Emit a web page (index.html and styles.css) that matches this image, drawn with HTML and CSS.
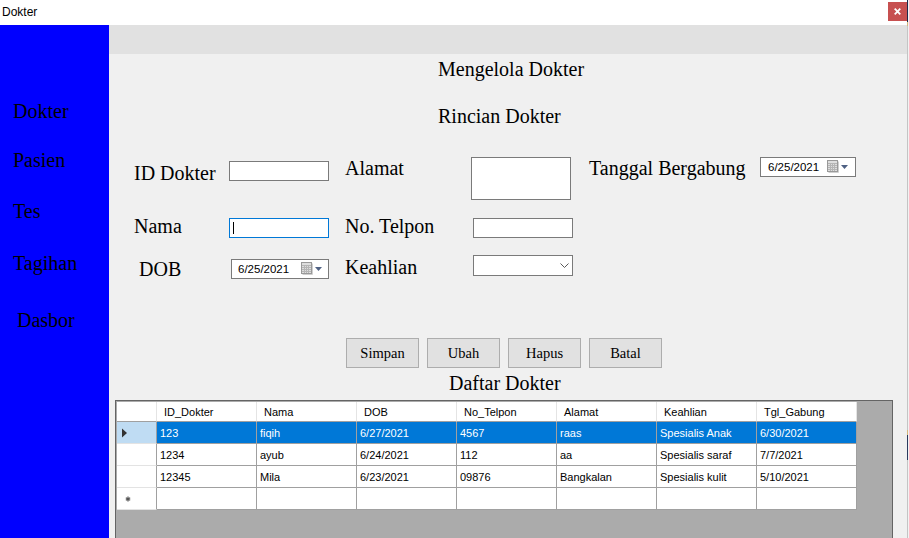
FILE: index.html
```html
<!DOCTYPE html>
<html lang="id">
<head>
<meta charset="utf-8">
<title>Dokter</title>
<link rel="stylesheet" href="styles.css">
</head>
<body>
<div class="app">
  <div class="frame">
    <header class="titlebar">
      <span class="title">Dokter</span>
      <button class="close" aria-label="Tutup">
        <svg width="7" height="7" viewBox="0 0 7 7"><path d="M0.7 0.7L6.3 6.3M6.3 0.7L0.7 6.3" stroke="#fff" stroke-width="1.8"/></svg>
      </button>
    </header>
    <div class="window">
      <nav class="sidebar">
        <a class="nav">Dokter</a>
        <a class="nav nav-pasien">Pasien</a>
        <a class="nav nav-tes">Tes</a>
        <a class="nav nav-tagihan">Tagihan</a>
        <a class="nav nav-dasbor">Dasbor</a>
      </nav>
      <main class="main">
        <div class="topstrip"></div>
        <h1 class="heading">Mengelola Dokter</h1>
        <h2 class="heading subheading">Rincian Dokter</h2>

        <div class="form-row row-1">
          <label class="label label-id">ID Dokter</label>
          <div class="field field-id"></div>
          <label class="label">Alamat</label>
          <div class="field field-area"></div>
          <label class="label">Tanggal Bergabung</label>
          <div class="field picker picker-join">
            <span class="date">6/25/2021</span>
            <svg class="cal" width="12" height="13" viewBox="0 0 12 13"><rect x="0.5" y="0.5" width="10" height="11" fill="#dedede" stroke="#999"/><path d="M1 3.5h9M1 5.5h9M1 7.5h9M1 9.5h9M3.5 3v8M5.5 3v8M7.5 3v8" stroke="#b5b5b5"/><path d="M11.5 1.5v11H1.5" stroke="#cfcfcf" fill="none"/></svg>
            <svg class="arrow" width="7" height="4" viewBox="0 0 7 4"><polygon points="0,0 7,0 3.5,4" fill="#4f6183"/></svg>
          </div>
        </div>

        <div class="form-row row-2">
          <label class="label">Nama</label>
          <div class="field field-name focused"><span class="caret"></span></div>
          <label class="label">No. Telpon</label>
          <div class="field field-phone"></div>
        </div>

        <div class="form-row row-3">
          <label class="label label-dob">DOB</label>
          <div class="field picker picker-dob">
            <span class="date">6/25/2021</span>
            <svg class="cal" width="12" height="13" viewBox="0 0 12 13"><rect x="0.5" y="0.5" width="10" height="11" fill="#dedede" stroke="#999"/><path d="M1 3.5h9M1 5.5h9M1 7.5h9M1 9.5h9M3.5 3v8M5.5 3v8M7.5 3v8" stroke="#b5b5b5"/><path d="M11.5 1.5v11H1.5" stroke="#cfcfcf" fill="none"/></svg>
            <svg class="arrow" width="7" height="4" viewBox="0 0 7 4"><polygon points="0,0 7,0 3.5,4" fill="#4f6183"/></svg>
          </div>
          <label class="label label-skill">Keahlian</label>
          <div class="field combo">
            <svg width="9" height="5" viewBox="0 0 9 5"><polyline points="0.5,0.5 4.5,4.5 8.5,0.5" fill="none" stroke="#5a5a5a" stroke-width="1"/></svg>
          </div>
        </div>

        <div class="actions">
          <button class="btn">Simpan</button>
          <button class="btn">Ubah</button>
          <button class="btn">Hapus</button>
          <button class="btn">Batal</button>
        </div>

        <h2 class="list-title">Daftar Dokter</h2>

        <div class="grid">
          <div class="grid-row grid-head">
            <div class="cell rowhead"></div>
            <div class="cell">ID_Dokter</div>
            <div class="cell">Nama</div>
            <div class="cell">DOB</div>
            <div class="cell">No_Telpon</div>
            <div class="cell">Alamat</div>
            <div class="cell">Keahlian</div>
            <div class="cell">Tgl_Gabung</div>
          </div>
          <div class="grid-row selected">
            <div class="cell rowhead"><svg width="6" height="10" viewBox="0 0 6 10"><polygon points="0,0.5 5,5 0,9.5" fill="#333"/></svg></div>
            <div class="cell">123</div>
            <div class="cell">fiqih</div>
            <div class="cell">6/27/2021</div>
            <div class="cell">4567</div>
            <div class="cell">raas</div>
            <div class="cell">Spesialis Anak</div>
            <div class="cell">6/30/2021</div>
          </div>
          <div class="grid-row">
            <div class="cell rowhead"></div>
            <div class="cell">1234</div>
            <div class="cell">ayub</div>
            <div class="cell">6/24/2021</div>
            <div class="cell">112</div>
            <div class="cell">aa</div>
            <div class="cell">Spesialis saraf</div>
            <div class="cell">7/7/2021</div>
          </div>
          <div class="grid-row">
            <div class="cell rowhead"></div>
            <div class="cell">12345</div>
            <div class="cell">Mila</div>
            <div class="cell">6/23/2021</div>
            <div class="cell">09876</div>
            <div class="cell">Bangkalan</div>
            <div class="cell">Spesialis kulit</div>
            <div class="cell">5/10/2021</div>
          </div>
          <div class="grid-row new-row">
            <div class="cell rowhead"><svg width="6" height="6" viewBox="0 0 6 6"><path d="M3 0.5v5M0.8 1.8l4.4 2.4M5.2 1.8L0.8 4.2" stroke="#555" stroke-width="1.2"/></svg></div>
            <div class="cell"></div>
            <div class="cell"></div>
            <div class="cell"></div>
            <div class="cell"></div>
            <div class="cell"></div>
            <div class="cell"></div>
            <div class="cell"></div>
          </div>
        </div>
      </main>
    </div>
  </div>
  <div class="edge"></div>
</div>
</body>
</html>
```

FILE: styles.css
```css
* {
  box-sizing: border-box;
  margin: 0;
  padding: 0;
}

body {
  width: 909px;
  height: 538px;
  overflow: hidden;
  background: #f2f2f2;
  font-family: "Liberation Serif", "Times New Roman", serif;
  color: #000;
}

.app {
  display: flex;
  height: 538px;
}

.frame {
  width: 907px;
  display: flex;
  flex-direction: column;
}

.edge {
  width: 1px;
  height: 538px;
  background: linear-gradient(to bottom,
    #1d2a4c 0, #1d2a4c 22px,
    #d6b77c 22px, #d6b77c 26px,
    #c4c4c4 26px, #c4c4c4 430px,
    #d6b77c 430px, #d6b77c 435px,
    #2b3a5e 435px, #2b3a5e 460px,
    #c4c4c4 460px);
}

/* Title bar */
.titlebar {
  height: 25px;
  flex-shrink: 0;
  display: flex;
  justify-content: space-between;
  align-items: flex-start;
  background: #fff;
  padding-left: 2px;
  font: 12px/25px "Liberation Sans", Arial, sans-serif;
}

.close {
  width: 19px;
  height: 19px;
  margin-top: 2px;
  border: 0;
  background: #c75050;
  display: flex;
  align-items: center;
  justify-content: center;
}

/* Window body */
.window {
  flex: 1;
  display: flex;
  min-height: 0;
}

.sidebar {
  width: 109px;
  flex-shrink: 0;
  background: #0000ff;
  display: flex;
  flex-direction: column;
  padding: 75px 0 0 13px;
  font-size: 20px;
  line-height: 23px;
}

.nav { color: #000; }
.nav-pasien { margin-top: 26px; }
.nav-tes { margin-top: 28px; }
.nav-tagihan { margin-top: 29px; }
.nav-dasbor { margin-top: 34px; margin-left: 4px; }

.main {
  flex: 1;
  background: #f0f0f0;
  display: flex;
  flex-direction: column;
  overflow: hidden;
}

.topstrip {
  height: 29px;
  flex-shrink: 0;
  background: #e1e1e1;
}

.heading {
  font-size: 20px;
  line-height: 23px;
  font-weight: normal;
  padding-left: 329px;
  margin-top: 4px;
}

.subheading { margin-top: 24px; }

/* Form */
.form-row {
  display: grid;
  grid-template-columns: 95px 116px 126px 118px 171px 100px;
  align-items: start;
  padding-left: 25px;
}

.row-1 { margin-top: 29px; }
.row-2 { margin-top: 15px; }
.row-3 { margin-top: 17px; }

.label {
  font-size: 20px;
  line-height: 23px;
  white-space: nowrap;
}

.row-1 .label-id { margin-top: 5px; }
.label-dob { margin-top: 3px; margin-left: 5px; }
.label-skill { margin-top: 1px; }

.field {
  width: 100px;
  height: 20px;
  background: #fff;
  border: 1px solid #7a7a7a;
}

.field-id { margin-top: 4px; }
.field-area { height: 43px; }
.field-name { margin-top: 3px; padding: 3px 0 0 3px; }
.field-phone { margin-top: 3px; margin-left: 2px; }
.focused { border-color: #0078d7; }

.caret {
  display: block;
  width: 1px;
  height: 12px;
  background: #000;
}

.picker {
  display: flex;
  align-items: center;
  font: 11.5px "Liberation Sans", Arial, sans-serif;
  padding: 0 6px 0 6px;
}

.picker-join { width: 96px; padding-left: 7px; padding-right: 7px; }
.picker-dob { width: 98px; margin-top: 4px; margin-left: 2px; }

.picker .cal { margin-left: auto; margin-top: -1px; }
.picker .arrow { margin-left: 2px; }

.combo {
  height: 21px;
  margin-left: 2px;
  display: flex;
  align-items: center;
  justify-content: flex-end;
  padding-right: 3px;
  padding-bottom: 1px;
}

/* Actions */
.actions {
  display: flex;
  gap: 8px;
  padding-left: 237px;
  margin-top: 57px;
}

.btn {
  width: 73px;
  height: 30px;
  background: #e1e1e1;
  border: 1px solid #adadad;
  font-family: "Liberation Serif", "Times New Roman", serif;
  font-size: 14.5px;
  color: #000;
}

.list-title {
  font-size: 20px;
  line-height: 23px;
  font-weight: normal;
  padding-left: 340px;
  margin-top: 4px;
}

/* Data grid */
.grid {
  flex-shrink: 0;
  width: 778px;
  height: 150px;
  margin: 5px 0 0 6px;
  background: #ababab;
  border: 1px solid #646464;
  border-bottom: 0;
  padding: 1px 0 0 1px;
  font: 11px "Liberation Sans", Arial, sans-serif;
}

.grid-row {
  display: flex;
  height: 22px;
}

.grid-head { height: 20px; }

.cell {
  width: 100px;
  flex-shrink: 0;
  background: #fff;
  border-right: 1px solid #a0a0a0;
  border-bottom: 1px solid #a0a0a0;
  padding-left: 3px;
  display: flex;
  align-items: center;
  white-space: nowrap;
  overflow: hidden;
}

.grid-head .cell {
  padding-left: 7px;
  border-right-color: #e4e4e4;
}

.rowhead {
  width: 40px;
  border-bottom-color: #e3e3e3;
  padding-left: 5px;
}

.grid-head .rowhead { border-bottom-color: #a0a0a0; }

.selected .cell {
  background: #0078d7;
  color: #fff;
}

.selected .rowhead { background: #bfdcf3; }

.new-row .rowhead { padding-left: 8px; }
```
